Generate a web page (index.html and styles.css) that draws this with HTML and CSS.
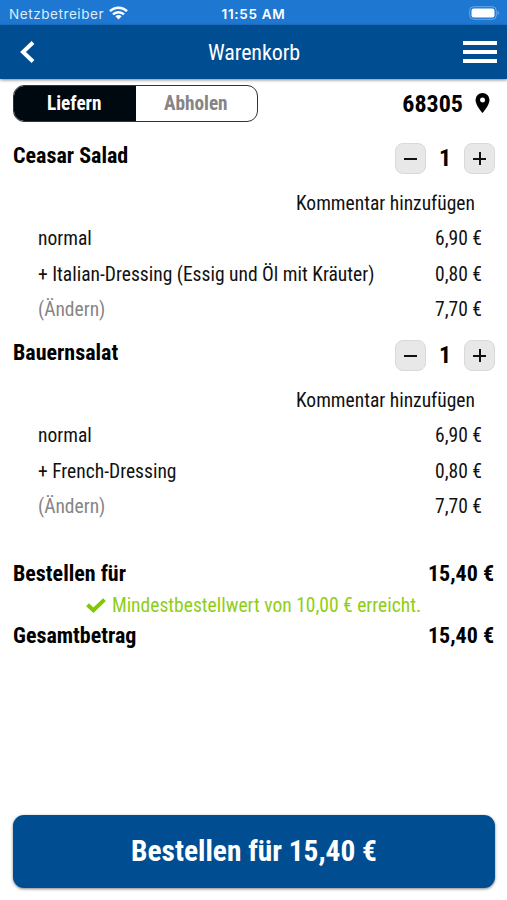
FILE: index.html
```html
<!DOCTYPE html>
<html lang="de">
<head>
<meta charset="utf-8">
<title>Warenkorb</title>
<link rel="stylesheet" href="styles.css">
</head>
<body>
<div class="status">
  <div class="carrier"><span>Netzbetreiber</span>
    <svg width="19" height="14" viewBox="0 0 19 14" fill="none" stroke="#fff" stroke-width="2.5"><path d="M1 5.1C5.7.5 13.3.5 18 5.1M4 8.3C7 5.4 12 5.4 15 8.3"/><path d="M9.5 13.4 6.4 10.3C8.2 8.7 10.8 8.7 12.6 10.3Z" fill="#fff" stroke="none"/></svg>
  </div>
  <div class="time">11:55 AM</div>
  <div class="power"><svg width="31" height="14" viewBox="0 0 31 14"><rect x=".7" y=".7" width="26.6" height="12.6" rx="4" fill="none" stroke="#69a9e8" stroke-width="1"/><rect x="2.5" y="2.5" width="23" height="9" rx="2.2" fill="#fff"/><path d="M28.6 4.8C30.4 5.5 30.4 8.5 28.6 9.2Z" fill="#69a9e8"/></svg></div>
</div>
<header class="nav">
  <svg class="back" width="15" height="22" viewBox="0 0 15 22" fill="none" stroke="#fff" stroke-width="4"><path d="M13 1.5 3 11 13 20.5"/></svg>
  <h1>Warenkorb</h1>
  <div class="menu"><i></i><i></i><i></i></div>
</header>
<main>
  <div class="mode">
    <div class="toggle"><span class="on">Liefern</span><span>Abholen</span></div>
    <div class="place"><span>68305</span><svg width="15" height="20" viewBox="0 0 14 20"><path fill="#000" fill-rule="evenodd" d="M7 0a7 7 0 0 0-7 7c0 5.2 7 13 7 13s7-7.800 7-13a7 7 0 0 0-7-7Zm0 4.500a2.500 2.500 0 1 1 0 5 2.500 2.500 0 0 1 0-5Z"/></svg></div>
  </div>
  <section class="item">
    <div class="head"><h2>Ceasar Salad</h2>
      <div class="stepper"><button class="minus"></button><b>1</b><button class="plus"></button></div></div>
    <div class="row comment">Kommentar hinzufügen</div>
    <div class="row"><span>normal</span><span>6,90 €</span></div>
    <div class="row"><span>+ Italian-Dressing (Essig und Öl mit Kräuter)</span><span>0,80 €</span></div>
    <div class="row"><span class="edit">(Ändern)</span><span>7,70 €</span></div>
  </section>
  <section class="item">
    <div class="head"><h2>Bauernsalat</h2>
      <div class="stepper"><button class="minus"></button><b>1</b><button class="plus"></button></div></div>
    <div class="row comment">Kommentar hinzufügen</div>
    <div class="row"><span>normal</span><span>6,90 €</span></div>
    <div class="row"><span>+ French-Dressing</span><span>0,80 €</span></div>
    <div class="row"><span class="edit">(Ändern)</span><span>7,70 €</span></div>
  </section>
  <section class="totals">
    <div class="total"><span>Bestellen für</span><span>15,40 €</span></div>
    <div class="minimum"><svg width="20" height="15" viewBox="0 0 20 15" fill="none" stroke="#80c800" stroke-width="4"><path d="M1.500 6.800 7.400 12.200 18.500 1.600"/></svg><span>Mindestbestellwert von 10,00 € erreicht.</span></div>
    <div class="total"><span>Gesamtbetrag</span><span>15,40 €</span></div>
  </section>
</main>
<button class="order">Bestellen für 15,40 €</button>
</body>
</html>
```
FILE: styles.css
```css
* { box-sizing: border-box; }
body {
  margin: 0;
  height: 900px;
  display: flex;
  flex-direction: column;
  overflow: hidden;
  background: #fff;
  color: #111;
  font-family: "Roboto Condensed", Roboto, sans-serif;
  font-stretch: 75%;
  font-size: 20px;
  white-space: nowrap;
}
h1, h2 { margin: 0; }
button { border: 0; padding: 0; font: inherit; }
svg { display: block; flex: none; }
.status {
  height: 25px;
  padding: 2px 7px 0 9px;
  display: grid;
  grid-template-columns: 1fr auto 1fr;
  align-items: center;
  background: #1e78d2;
  color: #fff;
  font-family: Inter, sans-serif;
  font-stretch: 100%;
  font-size: 13.5px;
}
.carrier { display: flex; gap: 5px; align-items: center; color: #deecfa; letter-spacing: .57px; }
.carrier svg { margin-top: -2px; }
.time { font-weight: 600; letter-spacing: .7px; margin-left: -2px; }
.power { display: flex; justify-content: flex-end; margin-top: -2px; }
.nav {
  height: 54px;
  flex: none;
  padding: 0 10px 0 20px;
  display: grid;
  grid-template-columns: 188px auto 1fr;
  align-items: center;
  background: #004d91;
  color: #fff;
  box-shadow: 0 1px 3px rgba(0, 0, 0, .5);
}
.nav h1 { font-size: 22px; font-weight: 400; letter-spacing: -.1px; }
.menu { display: grid; gap: 5px; justify-content: end; }
.menu i { width: 34px; height: 4px; background: #fff; }
main { padding: 6px 12px 0 13px; }
.mode { height: 37px; display: flex; justify-content: space-between; align-items: center; }
.toggle {
  width: 245px;
  height: 37px;
  display: grid;
  grid-template-columns: 1fr 1fr;
  border: 1px solid #333;
  border-radius: 11px;
  overflow: hidden;
  font-size: 19.3px;
  font-weight: 700;
  line-height: 36px;
  text-align: center;
  color: #858585;
}
.toggle span { height: 35px; padding-right: 1px; }
.toggle .on { background: #000810; color: #fff; }
.place { display: flex; align-items: center; gap: 12px; margin-right: 5px; font-size: 24px; font-weight: 700; color: #000; }
.place svg { margin-top: -2px; }
.item { height: 197px; }
.mode + .item { margin-top: 16px; }
.head { height: 47.5px; display: flex; justify-content: space-between; align-items: flex-start; color: #000; }
.head h2 { font-size: 22px; line-height: 36px; }
.stepper { display: flex; align-items: center; margin-top: 5px; }
.stepper b { width: 38px; text-align: center; font-size: 24px; line-height: 31px; }
.stepper button {
  width: 31px;
  height: 31px;
  border: 1px solid #d9d9d9;
  border-radius: 8px;
  background: linear-gradient(#111, #111) center / 13px 2px no-repeat #e8e8e8;
}
.stepper .plus {
  background: linear-gradient(#111, #111) center / 13px 2px no-repeat,
    linear-gradient(#111, #111) center / 2px 13px no-repeat #e8e8e8;
}
.row {
  height: 35.5px;
  padding: 0 13px 0 25px;
  display: flex;
  justify-content: space-between;
  align-items: center;
  font-size: 19.55px;
}
.comment { justify-content: flex-end; padding-right: 20px; }
.edit { color: #858585; }
.totals { margin-top: 26px; color: #000; }
.total { height: 31px; padding-right: 1px; display: flex; justify-content: space-between; align-items: center; font-size: 22px; font-weight: 700; }
.minimum { height: 31px; padding: 2px 1px 0 0; display: flex; justify-content: center; align-items: center; gap: 6px; color: #8fce16; font-size: 19.55px; }
.order {
  height: 73px;
  flex: none;
  margin: auto 12px 12px 13px;
  padding-bottom: 2px;
  border-radius: 11px;
  background: #004d91;
  box-shadow: 0 1px 3px rgba(0, 0, 0, .5);
  color: #fff;
  font-size: 29.4px;
  font-weight: 700;
}
```
